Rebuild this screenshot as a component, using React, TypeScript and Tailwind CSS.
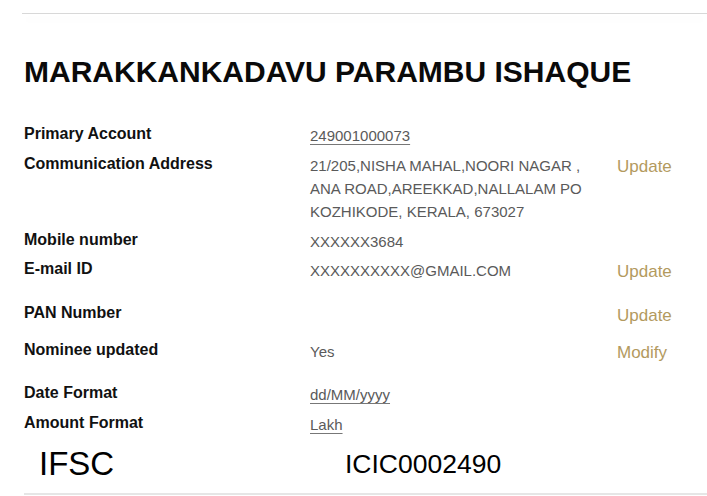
import React from "react";

type Row = {
  label: string;
  value?: React.ReactNode;
  link?: boolean;
  action?: string;
  h: string;
};

const ROWS: Row[] = [
  { label: "Primary Account", value: "249001000073", link: true, h: "h-[30px]" },
  {
    label: "Communication Address",
    value: (
      <>
        21/205,NISHA MAHAL,NOORI NAGAR ,<br />
        ANA ROAD,AREEKKAD,NALLALAM PO
        <br />
        KOZHIKODE, KERALA, 673027
      </>
    ),
    action: "Update",
    h: "h-[76px]",
  },
  { label: "Mobile number", value: "XXXXXX3684", h: "h-[29px]" },
  { label: "E-mail ID", value: "XXXXXXXXXX@GMAIL.COM", action: "Update", h: "h-[44px]" },
  { label: "PAN Number", action: "Update", h: "h-[37px]" },
  { label: "Nominee updated", value: "Yes", action: "Modify", h: "h-[43px]" },
  { label: "Date Format", value: "dd/MM/yyyy", link: true, h: "h-[30px]" },
  { label: "Amount Format", value: "Lakh", link: true, h: "h-[31px]" },
];

export default function App() {
  return (
    <div className="w-[707px] h-[496px] overflow-hidden bg-white font-['Liberation_Sans',Arial,sans-serif]">
      {/* header rule */}
      <div className="pt-[13px]">
        <div className="ml-[22px] h-px bg-[#d8d8d8] shadow-[0_6px_10px_rgba(0,0,0,0.06)]" />
      </div>

      <div className="pl-[24px]">
        <h1 className="mt-[40px] text-[30px] leading-[36px] font-bold text-[#0a0a0a] whitespace-nowrap">
          MARAKKANKADAVU PARAMBU ISHAQUE
        </h1>

        <div className="mt-[34px]">
          {ROWS.map((r) => (
            <div key={r.label} className={`grid grid-cols-[286px_307px_1fr] ${r.h}`}>
              <div className="text-[16px] leading-[20px] font-bold text-[#111]">{r.label}</div>
              <div
                className={`text-[15px] leading-[23px] text-[#5a5a5a] whitespace-nowrap ${
                  r.link ? "underline underline-offset-[3px] decoration-[#777]" : ""
                }`}
              >
                {r.value}
              </div>
              <div className="text-[17px] leading-[25px] text-[#b39a5e]">{r.action}</div>
            </div>
          ))}
        </div>

        <div className="flex items-center h-[40px] text-black">
          <span className="ml-[15px] w-[306px] text-[33px] leading-[40px]">IFSC</span>
          <span className="text-[26.5px] leading-[40px]">ICIC0002490</span>
        </div>

        <div className="mt-[9px] h-[2px] bg-[#e6e6e6]" />
      </div>
    </div>
  );
}
